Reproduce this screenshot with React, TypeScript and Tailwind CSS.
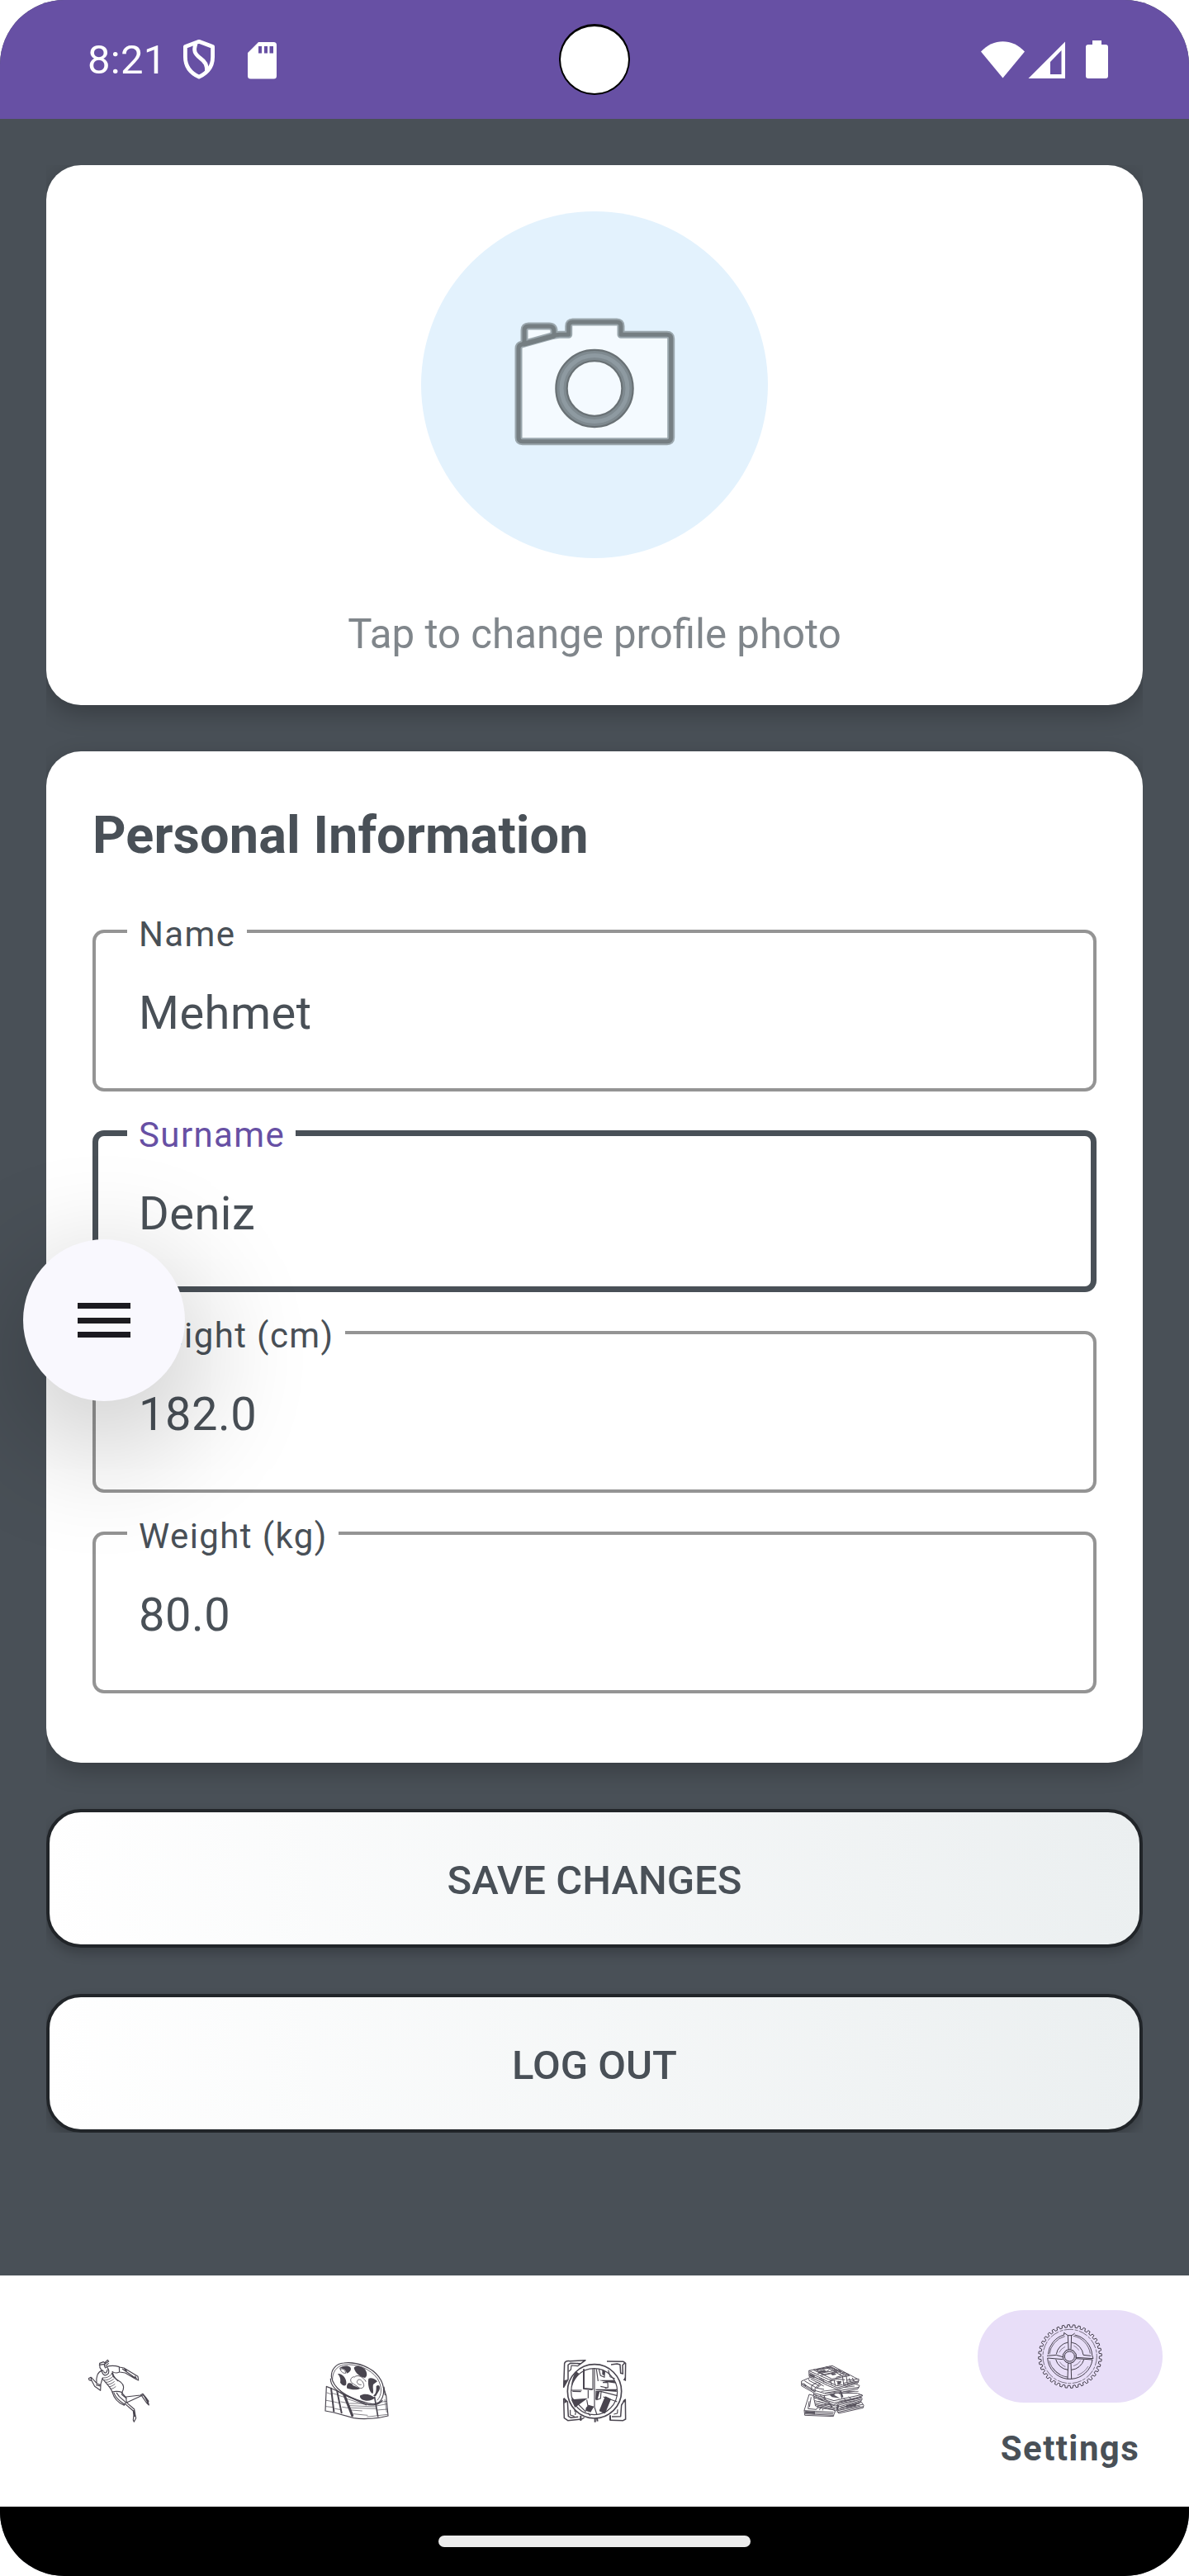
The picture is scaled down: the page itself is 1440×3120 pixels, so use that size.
import type { ReactNode } from "react";

function ShieldIcon() {
  return (
    <svg className="h-[50px] w-[42px]" viewBox="0 0 42 50" fill="none" stroke="white" strokeWidth="4.8" strokeLinejoin="round">
      <path d="M21 3.3 37.6 9.5V22c0 11-6.600 19.500-16.600 24.200C11 41.500 4.400 33 4.400 22V9.500Z" />
      <path d="M17 6c-3 9-1 12 5 17 7 5 9 9 8.500 17" />
    </svg>
  );
}

function SdIcon() {
  return (
    <svg className="h-[45px] w-[35px]" viewBox="0 0 35 45">
      <path fill="white" fillRule="evenodd" d="M13 0h18.500A3.500 3.500 0 0 1 35 3.500v37.500a3.500 3.500 0 0 1-3.500 3.500h-28A3.500 3.500 0 0 1 0 41V13Zm0 5v8.500h4V5Zm7 0v8.500h4V5Zm6.500 0v8.500H31V5Z" />
    </svg>
  );
}

function StatusIcons() {
  return (
    <svg className="h-[48px] w-[156px]" viewBox="1187 48 156 48" fill="white">
      <path d="M1188 62.500C1203 46 1226 46 1241 62.500L1214.500 94.500Z" />
      <path fillRule="evenodd" d="M1290 50.500V95h-44.500ZM1285.500 61 1272 75v15h13.500Z" />
      <path d="M1323 49h11v5h5a3 3 0 0 1 3 3v35a3 3 0 0 1-3 3h-21a3 3 0 0 1-3-3V57a3 3 0 0 1 3-3h5Z" />
    </svg>
  );
}

function CameraIcon() {
  const body =
    "M118 166Q118 162 122 161L158 151Q164 149.300 168 149.300H178.700V139Q178.700 134 183.700 134H237Q242 134 242 139V149.300H297.700Q302.700 149.300 302.700 154V274Q302.700 278.700 298 278.700H122.700Q118 278.700 118 274Z";
  const flash = "M125 161V144Q125 139 130 139H155Q161 139 161 145V151Z";
  return (
    <svg className="size-[420px]" viewBox="0 0 420 420" strokeLinejoin="round">
      <g fill="#f4faff" stroke="#9ba7ad" strokeWidth="9">
        <path d={flash} />
        <path d={body} />
      </g>
      <g fill="none" stroke="#757e82" strokeWidth="5">
        <path d={flash} />
        <path d={body} />
      </g>
      <circle cx="210" cy="214.400" r="40" fill="none" stroke="#697175" strokeWidth="15.500" />
      <circle cx="210" cy="214.400" r="40" fill="none" stroke="#7f8a90" strokeWidth="11" />
      <circle cx="210" cy="214.400" r="40" fill="none" stroke="#8e9aa1" strokeWidth="5" />
    </svg>
  );
}

function RunnerIcon() {
  return (
    <svg className="size-[84px]" viewBox="36 72 252 252" fill="none" stroke="#49454f" strokeWidth="3.500" strokeLinejoin="round" strokeLinecap="round">
      <path d="M92 97 106 92 112 96 109 106 113 114M92 97 93 113 99 122 105 124M91 103 110 100M110 96 121 85 125 90 112 99M114 106 124 98" />
      <path d="M99 124C86 128 78 145 81 170L95 176 103 150M100 125C103 142 114 145 124 134 128 124 123 112 116 111M107 128C112 136 119 132 120 120" />
      <path d="M118 109C135 104 151 106 163 110L164 129C153 134 144 132 138 127M164 111 180 114 231 145 233 159 222 154 185 132 165 129M175 118 220 149M181 115 190 126M221 144 226 154" />
      <path d="M81 169 64 151 60 148 52 152 54 158 63 160 74 181 95 196 96 176M80 176 94 180M60 149 62 157" />
      <path d="M102 153C112 166 131 183 138 201M139 131C142 148 157 160 169 166 179 174 181 188 174 202M136 133 142 146 158 161" />
      <path d="M105 150C118 151 127 146 135 137M108 158C119 160 130 154 139 146M114 166C126 167 133 161 142 155M120 174C129 175 136 170 145 164M127 182C134 182 140 178 147 173M133 190C139 190 144 187 150 182" strokeWidth="2.500" />
      <path d="M138 201C149 198 161 198 174 203L173 211C178 216 184 219 189 224M138 202C143 220 158 240 181 250L187 239 163 218 154 205M144 205C150 221 162 233 182 246" />
      <path d="M174 206 188 222 190 240 250 212 267 234 271 249 262 240 246 217M188 219 240 213 249 208 259 220 270 235M189 239 218 264 222 288 224 296 217 310 214 303 216 286 214 270 184 244M217 268 219 290M255 218 268 242" />
    </svg>
  );
}

function ReelIcon() {
  return (
    <svg className="size-[84px]" viewBox="45 42 252 252" fill="none" stroke="#49454f" strokeWidth="3.500" strokeLinejoin="round" strokeLinecap="round">
      <path d="M79 115C78 90 96 68 124 66C172 60 226 82 251 116C276 150 274 190 251 210C242 218 216 216 198 208C150 194 88 168 79 115Z" />
      <path d="M83 126C82 101 98 76 124 73C172 67 220 87 246 122C264 150 264 182 246 201" strokeWidth="2.500" />
      <path d="M76 123C75 156 110 176 142 190L202 215C232 224 254 216 264 202M270 153 274 182" />
      <g fill="#49454f" stroke="none">
        <path d="M107 85C118 76 140 73 148 82C154 91 145 101 135 104C132 91 121 84 107 85Z" />
        <path d="M161 84C166 73 188 76 200 88C208 97 212 114 201 120C184 116 168 107 161 84Z" />
        <path d="M102 105C118 103 136 122 133 142C131 153 118 149 111 137C114 124 109 114 102 105Z" />
        <path d="M214 123C223 118 236 123 246 133L231 144C228 158 234 169 229 178C216 172 210 142 214 123ZM242 150C255 140 259 158 251 169L240 187 231 185C243 176 242 164 242 150Z" />
        <path d="M139 140C148 137 154 139 157 147L184 158C175 165 150 163 136 158C134 151 135 146 139 140Z" />
        <path d="M184 184C199 174 223 180 237 193C226 204 205 207 189 198C184 194 181 189 184 184Z" />
      </g>
      <path d="M111 87C122 86 131 93 131 103 120 104 114 98 111 87ZM160 116C144 120 146 137 161 143L181 157C192 160 200 153 196 142C193 129 178 121 174 130 167 140 182 147 187 145M162 118C171 105 196 116 204 133" strokeWidth="2.500" />
      <path d="M61 151 57 240 88 246 160 266C200 272 253 267 285 258L278 184 268 155M62 152 76 157 140 187 206 217" />
      <path d="M78 158 88 242M100 170 116 247" strokeWidth="6" />
      <path d="M126 183 155 257" strokeWidth="9" />
      <path d="M236 190 248 260" strokeWidth="5" />
      <path d="M112 166 122 183M63 174 80 180M82 176 104 182M105 184 126 190M61 202 84 206M88 207 109 212M114 207 134 211M59 224 85 227M92 232 115 236M119 226 143 230M135 196 206 219M144 213H202M145 221 240 225M149 229 240 232M151 237 190 240M240 211 279 205M242 222 281 215M245 237 282 234M273 199 280 245M160 251 210 256M209 262 282 253" strokeWidth="2" />
    </svg>
  );
}

function ClockIcon() {
  return (
    <svg className="size-[84px]" viewBox="39 42 252 252" fill="none" stroke="#49454f" strokeWidth="3.500" strokeLinejoin="round">
      <circle cx="165" cy="169" r="98" strokeWidth="5" />
      <circle cx="164" cy="170" r="84" />
      <path d="M53 154 56 67Q61 56 76 59L132 56 116 68 77 67 69 73V126ZM210 60 270 61 278 67 277 131M225 72 247 69 258 72 260 103 268 105 267 74 277 64M277 198 278 270 269 275 220 274M275 200 263 219 260 260 228 261M53 195 55 266 68 275 119 270 128 264M53 194 67 207 70 260 80 265 106 262" strokeWidth="4.500" />
      <path d="M71 97 79 90 81 75 104 77 114 70 102 67M91 239 97 242 95 255M77 236V255L92 260M235 252 248 249 249 235" />
      <path d="M53 154V130L67 126ZM269 128 279 130 276 118ZM55 194 67 206 55 213ZM278 195 267 205 278 210Z" fill="#49454f" stroke="none" />
      <path d="M126 88V159L158 162" strokeWidth="6" />
      <path d="M159 86V163M165 84V226M172 88 178 132M79 165H119M116 170 85 169M170 163H246M171 200V169H189L187 195 172 200M190 170 248 185M197 189 247 207M137 200 141 222M142 165V194M195 137 213 137 214 155 203 158M187 151 210 156M181 88 187 112 201 118 201 94M215 92 222 116 239 123M82 192 134 244M165 226 174 255M142 248 150 258" />
      <path d="M98 97Q84 116 80 152L91 130 109 104ZM166 164 244 164 246 171ZM180 128 235 128 243 140 207 135ZM193 89 204 99 201 112 193 108ZM80 199 140 194 94 228ZM172 170 184 170 176 198 169 198ZM134 229 143 218 164 224 156 236 151 245 132 239Z" fill="#49454f" stroke="none" />
      <path d="M205 190 222 198 202 247 185 239Z" fill="#49454f" strokeWidth="5" />
      <path d="M115 257V276M167 266V281M174 267 176 278M222 256V273" strokeWidth="6" />
    </svg>
  );
}

function MoneyIcon() {
  return (
    <svg className="size-[84px]" viewBox="33 42 252 252" fill="white" stroke="#57525d" strokeWidth="3" strokeLinejoin="round">
      <path d="M75 180 57 238 59 256 163 260 169 238 112 190ZM57 239 164 245M60 245 162 251M59 251 163 256M75 205 71 232 101 235 113 214M82 190 76 226M120 224 112 237M128 224 124 238" />
      <path d="M174 236 265 208 273 220 271 229 182 249ZM176 240 270 216M178 245 272 224M105 228 164 236 172 246" />
      <path d="M92 194 98 222 170 238 262 207 268 196 253 190ZM95 203 170 222 264 198M97 211 169 229 263 203M98 217 170 234M106 222 176 210 258 195" />
      <path d="M92 175 90 190 164 218 254 190 270 184 250 176ZM92 181 165 203 267 181M93 187 166 211 268 189M108 190 126 203M115 184 143 205M200 193 210 205M218 188 230 199" />
      <path d="M47 132 47 149 95 176 129 185 252 160 258 148 210 130 80 118ZM47 139 96 166 130 176 256 154M48 144 96 171M58 131 102 157 129 162M73 124 75 130 110 148M80 123 128 150M84 148 104 136 115 141 96 157 97 170 83 164ZM101 158 119 145" />
      <path d="M74 94 75 115 143 148 177 162 252 139 256 127 239 118 159 76ZM76 101 142 133 177 149 255 131M75 108 144 141 177 156 254 134M74 94 146 126 176 132 256 124" />
      <path d="M90 91 156 81 222 112 158 124ZM101 92 152 84 176 97 129 108ZM116 91 125 99 141 96 149 88M135 79 196 114 201 150M148 78 210 113 214 148M105 105 183 91 192 97 115 112M152 130 157 145M165 127 170 149M173 118 219 106M184 107 204 101M220 121 226 137M232 120 238 134M143 135 177 124 205 127" />
      <path d="M107 96 130 91 138 97 112 102ZM153 106 168 103 174 108 160 111ZM191 165 199 188 192 196 186 169ZM147 180 171 174 166 182 187 194 158 190ZM91 178 104 184 103 190ZM177 216 184 220 180 236 173 233ZM61 240 96 243 96 252 60 248ZM129 180 136 198 128 193ZM76 104 95 112 94 121 77 114ZM151 215 161 224 154 230ZM53 137 66 148 61 153ZM177 133 192 131 190 142 178 146ZM210 219 248 211 246 221 209 229Z" fill="#5a5660" stroke="none" />
      <path d="M112 121 125 128M126 125 128 137M81 110 139 139M199 139 241 130M202 147 243 138M204 155 240 150M119 169 188 161M132 177 187 170M183 178 239 169M199 170 254 169M105 196 151 210M108 205 154 220M184 205 242 194M180 213 242 203M187 228 259 213M189 236 260 223" strokeWidth="2.500" />
    </svg>
  );
}

const TEETH = 36;
const gearOutline =
  Array.from({ length: TEETH }, (_, i) => {
    const step = (Math.PI * 2) / TEETH;
    const at = (r: number, k: number) =>
      `${(408 + r * Math.cos((i + k) * step)).toFixed(1)} ${(342 + r * Math.sin((i + k) * step)).toFixed(1)}`;
    return `${i ? "L" : "M"}${at(106, 0)}L${at(106, 0.42)}L${at(115, 0.52)}L${at(115, 0.9)}`;
  }).join("") + "Z";

function GearIcon() {
  return (
    <svg className="size-[84px]" viewBox="282 216 252 252" fill="none" stroke="#2a2530" strokeWidth="2.600" strokeLinejoin="round">
      <path d={gearOutline} />
      <circle cx="407" cy="342" r="98" strokeWidth="1.800" strokeDasharray="34 5 12 4" />
      <path d="M328 334A80 80 0 0 1 386 264V256L400 266H414L425 258M425 264A80 80 0 0 1 488 337L492 350 430 346M324 340 358 337 381 344M326 348A82 82 0 0 0 399 424H412A82 82 0 0 0 489 354L430 350M326 348 382 353" />
      <path d="M333 334A76 76 0 0 1 389 269M420 268A76 76 0 0 1 481 332M333 358A76 76 0 0 0 399 417" strokeWidth="2" />
      <path d="M400 266 402 316M413 266 411 316M401 367 399 424M411 367 413 424" />
      <path d="M358 334A52 52 0 0 1 400 291M413 291A52 52 0 0 1 456 337L484 340M356 353A52 52 0 0 0 400 391M413 391A52 52 0 0 0 458 354" />
      <path d="M368 328A42 42 0 0 1 390 307M421 303A42 42 0 0 1 440 320M370 362A42 42 0 0 0 391 380M420 377A42 42 0 0 0 446 358M345 383A76 76 0 0 0 372 408M435 410A76 76 0 0 0 474 378" strokeWidth="1.500" />
      <path d="M393 320 406 316 420 321 430 334V350L420 363 406 368 393 363 382 350V335Z" />
      <circle cx="406" cy="342" r="18" />
      <circle cx="406" cy="342" r="22" strokeWidth="1" />
    </svg>
  );
}

function Field({ label, value, focused = false }: { label: string; value: string; focused?: boolean }) {
  return (
    <div
      className={
        focused
          ? "relative flex h-[196px] items-center rounded-[14px] px-14 pt-1.5 inset-ring-[7px] inset-ring-[#495057]"
          : "relative flex h-[196px] items-center rounded-[14px] px-14 pt-1.5 inset-ring-[4px] inset-ring-[#949494]"
      }
    >
      <span
        className={
          focused
            ? "absolute -top-[14px] left-[42px] bg-white pl-3.5 pr-[13px] text-[42px] leading-10 tracking-[1.4px] text-[#6750a4]"
            : "absolute -top-[14px] left-[42px] bg-white pl-3.5 pr-[13px] text-[42px] leading-10 tracking-[1.4px] text-[#495057]"
        }
      >
        {label}
      </span>
      <span className="text-[56px] leading-none tracking-[0.5px]">{value}</span>
    </div>
  );
}

function ActionButton({ children }: { children: ReactNode }) {
  return (
    <button className="mt-14 flex h-[168px] w-full items-center justify-center rounded-[42px] border-4 border-[#212529] bg-[linear-gradient(83deg,#ffffff,#ebeff0)] bg-origin-border pt-[5px] text-[49px] font-medium leading-none shadow-[0_7px_14px_rgba(0,0,0,0.22)]">
      {children}
    </button>
  );
}

function NavItem({ children }: { children: ReactNode }) {
  return <div className="flex flex-1 items-center justify-center">{children}</div>;
}

export default function App() {
  return (
    <div className="relative h-[3120px] w-[1440px] bg-white font-['Roboto',sans-serif] text-[#495057]">
      <div className="flex h-full flex-col overflow-hidden rounded-[78px] bg-[#495057]">
        <header className="relative flex h-36 shrink-0 items-center bg-[#6750a4] pl-[106px] pr-[97px] text-white">
          <span className="w-[114px] text-[49px] leading-none tracking-[0.3px]">8:21</span>
          <ShieldIcon />
          <div className="ml-[38px] mt-[3px] flex-1">
            <SdIcon />
          </div>
          <StatusIcons />
          <div className="absolute left-[677px] top-[29px] size-[86px] rounded-full border-2 border-t-[3px] border-black bg-white" />
        </header>

        <main className="flex-1 px-14 pt-14">
          <div className="overflow-hidden">
            <section className="flex h-[654px] flex-col items-center rounded-[42px] bg-white pt-14 shadow-[0_10px_28px_rgba(0,0,0,0.24)]">
              <div className="size-[420px] rounded-full bg-[#e3f2fd]">
                <CameraIcon />
              </div>
              <p className="mt-[59px] text-[49.2px] leading-[66px] text-[#80868b]">Tap to change profile photo</p>
            </section>

            <section className="mt-14 h-[1225px] rounded-[42px] bg-white px-14 pt-[60px] shadow-[0_10px_28px_rgba(0,0,0,0.24)]">
              <h1 className="text-[63px] font-bold leading-[84px] tracking-[0.1px]">Personal Information</h1>
              <div className="mt-18 flex flex-col gap-[47px]">
                <Field label="Name" value="Mehmet" />
                <Field label="Surname" value="Deniz" focused />
                <Field label="Height (cm)" value="182.0" />
                <Field label="Weight (kg)" value="80.0" />
              </div>
            </section>

            <ActionButton>SAVE CHANGES</ActionButton>
            <ActionButton>LOG OUT</ActionButton>
          </div>
        </main>

        <nav className="flex h-[280px] shrink-0 bg-white">
          <NavItem><RunnerIcon /></NavItem>
          <NavItem><ReelIcon /></NavItem>
          <NavItem><ClockIcon /></NavItem>
          <NavItem><MoneyIcon /></NavItem>
          <div className="flex flex-1 flex-col items-center pt-[42px]">
            <div className="flex h-28 w-56 items-center justify-center rounded-full bg-[#e8def8]">
              <GearIcon />
            </div>
            <span className="mt-7 text-[42px] font-bold leading-[56px] tracking-[1.4px]">Settings</span>
          </div>
        </nav>

        <footer className="flex h-[84px] shrink-0 items-center justify-center bg-black">
          <div className="h-3.5 w-[378px] rounded-full bg-[#ececec]" />
        </footer>
      </div>

      <div className="absolute left-0 top-[1200px] h-[900px] w-[900px] overflow-hidden">
        <button className="absolute left-7 top-[301px] flex size-[196px] flex-col items-center justify-center gap-[10.5px] rounded-full bg-[#f9f8fe] shadow-[0_42px_140px_20px_rgba(0,0,0,0.2)]">
          <span className="h-[7px] w-16 bg-[#1c1b20]" />
          <span className="h-[7px] w-16 bg-[#1c1b20]" />
          <span className="h-[7px] w-16 bg-[#1c1b20]" />
        </button>
      </div>
    </div>
  );
}
